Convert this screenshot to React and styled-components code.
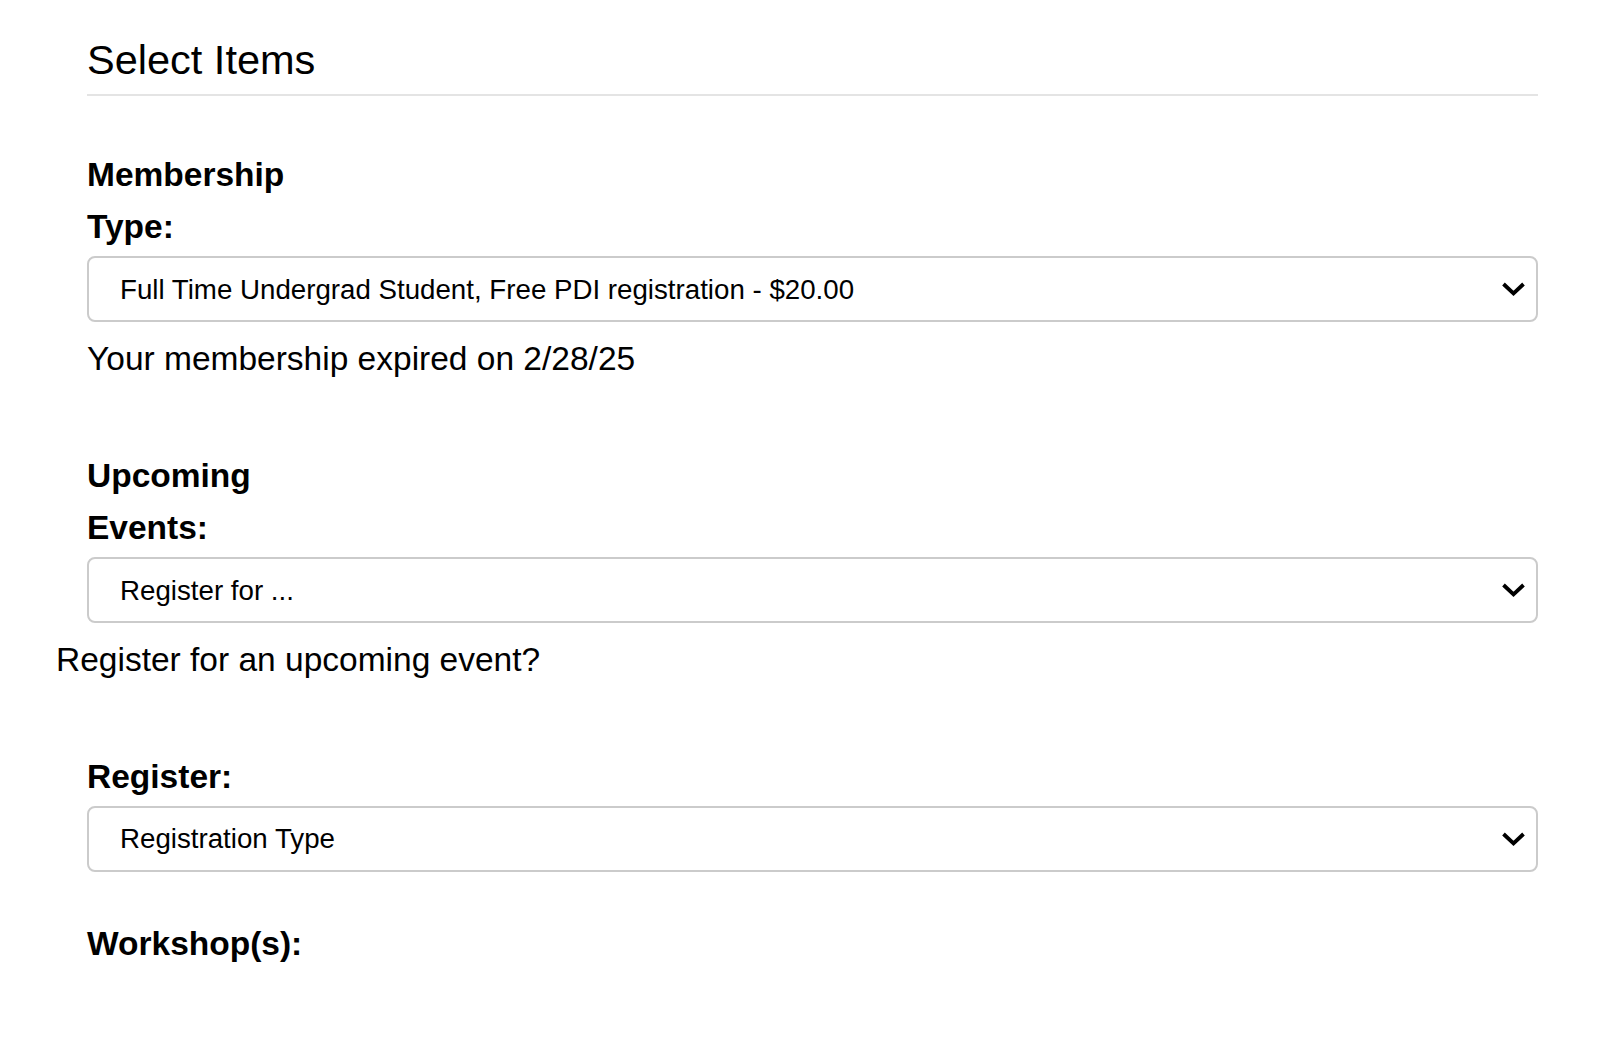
import React from 'react';
import styled, { createGlobalStyle } from 'styled-components';

const GlobalStyle = createGlobalStyle`
  body {
    margin: 0;
    background: #fff;
    color: #000;
    font-family: 'Liberation Sans', Arial, sans-serif;
  }
`;

const Page = styled.div`
  padding: 35px 62px 60px 56px;
`;

const Section = styled.div`
  padding-left: 31px;
`;

const Title = styled.h2`
  margin: 0;
  font-size: 41.5px;
  font-weight: 400;
  line-height: 49px;
  padding-bottom: 10px;
  border-bottom: 2px solid #e4e4e4;
`;

const FormGroup = styled.div`
  margin-top: ${(p) => p.$top}px;
`;

const Label = styled.label`
  display: block;
  max-width: 250px;
  margin-bottom: 3px;
  font-size: 33.5px;
  font-weight: 700;
  line-height: 52px;
`;

const SelectWrap = styled.div`
  position: relative;
`;

const Select = styled.select`
  display: block;
  width: 100%;
  height: 66px;
  box-sizing: border-box;
  padding: 0 60px 0 31px;
  border: 2px solid #cbcbcb;
  border-radius: 8px;
  background: #fff;
  color: #000;
  font-family: 'Liberation Sans', Arial, sans-serif;
  font-size: 27.7px;
  appearance: none;
  -webkit-appearance: none;
  outline: none;
`;

const Chevron = styled.svg`
  position: absolute;
  right: 12px;
  top: 50%;
  transform: translateY(-50%);
  pointer-events: none;
`;

const Help = styled.p`
  margin: 10.5px 0 0 ${(p) => (p.$outdent ? '-31px' : '0')};
  font-size: 33.5px;
  line-height: 52px;
`;

function Dropdown({ id, options }) {
  return (
    <SelectWrap>
      <Select id={id} defaultValue={options[0]}>
        {options.map((o) => (
          <option key={o} value={o}>{o}</option>
        ))}
      </Select>
      <Chevron width="25" height="15" viewBox="0 0 25 15">
        <path d="M2.5 2.5 L12.5 12 L22.5 2.5" fill="none" stroke="#000" strokeWidth="3.8" />
      </Chevron>
    </SelectWrap>
  );
}

export default function App() {
  return (
    <Page>
      <GlobalStyle />
      <Section>
        <Title>Select Items</Title>

        <FormGroup $top={53}>
          <Label htmlFor="membership">Membership Type:</Label>
          <Dropdown
            id="membership"
            options={['Full Time Undergrad Student, Free PDI registration - $20.00']}
          />
          <Help>Your membership expired on 2/28/25</Help>
        </FormGroup>

        <FormGroup $top={65.5}>
          <Label htmlFor="events">Upcoming Events:</Label>
          <Dropdown id="events" options={['Register for ...']} />
          <Help $outdent>Register for an upcoming event?</Help>
        </FormGroup>

        <FormGroup $top={65}>
          <Label htmlFor="register">Register:</Label>
          <Dropdown id="register" options={['Registration Type']} />
        </FormGroup>

        <FormGroup $top={46}>
          <Label>Workshop(s):</Label>
        </FormGroup>
      </Section>
    </Page>
  );
}
